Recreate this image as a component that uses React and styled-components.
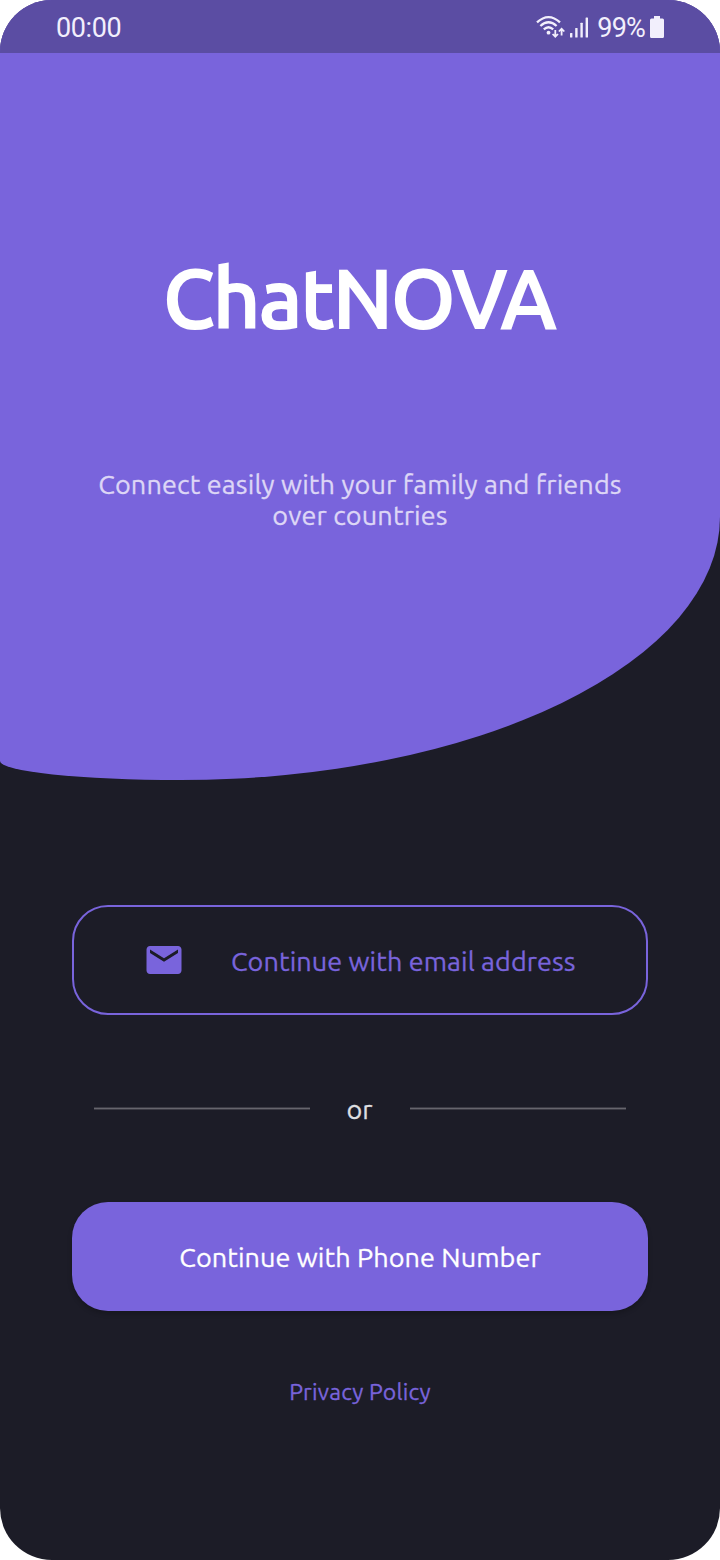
import React from "react";
import styled, { createGlobalStyle } from "styled-components";

const violet = "#7964dc";

const GlobalStyle = createGlobalStyle`
  *, *::before, *::after { box-sizing: border-box; }
  body { margin: 0; background: #fff; }
`;

const Screen = styled.main`
  display: flex;
  flex-direction: column;
  width: 720px;
  height: 1560px;
  overflow: hidden;
  border-radius: 52px;
  background: #1c1c27;
  font-family: Ubuntu, "Noto Sans", sans-serif;
  font-size: 27px;
  -webkit-text-stroke: 0.3px;
`;

const Hero = styled.header`
  display: flex;
  flex-direction: column;
  align-items: center;
  height: 780px;
  flex: none;
  background: ${violet};
  border-radius: 0 0 540px 180px / 0 0 263px 19px;
`;

const StatusBar = styled.div`
  display: flex;
  align-items: center;
  justify-content: space-between;
  width: 100%;
  height: 53px;
  padding: 0 56px;
  background: #5b4da3;
  color: #f2effc;
  font-family: Roboto, sans-serif;
  font-size: 27px;
  line-height: 53px;
  -webkit-text-stroke: 0;
`;

const Clock = styled.span`
  padding-top: 3px;
  letter-spacing: -0.4px;
`;

const Indicators = styled.div`
  display: flex;
  align-items: center;
  height: 53px;
`;

const Percent = styled.span`
  padding-top: 3px;
  margin: 0 5px 0 7px;
  letter-spacing: -0.8px;
`;

const Title = styled.h1`
  margin: 187px 0 0;
  padding-right: 2px;
  font-size: 82px;
  font-weight: 500;
  line-height: 116px;
  letter-spacing: -1.4px;
  color: #fff;
  -webkit-text-stroke: 2px;
`;

const Tagline = styled.p`
  margin: 113px 0 0;
  text-align: center;
  line-height: 31px;
  letter-spacing: 0.14px;
  color: #ddd6f6;
`;

const Line = styled.span`
  display: block;
`;

const Actions = styled.section`
  display: flex;
  flex-direction: column;
  align-items: center;
  padding: 125px 72px 0;
`;

const Button = styled.button`
  display: flex;
  align-items: center;
  justify-content: center;
  width: 576px;
  height: 110px;
  padding: 0;
  border-radius: 36px;
  font: inherit;
  letter-spacing: 0.08px;
  white-space: nowrap;
`;

const EmailButton = styled(Button)`
  justify-content: flex-start;
  padding: 1px 0 0 69px;
  gap: 46px;
  border: 2px solid ${violet};
  background: transparent;
  color: ${violet};
`;

const PhoneButton = styled(Button)`
  height: 109px;
  border: 0;
  background: ${violet};
  color: #fff;
  box-shadow: 0 3px 5px rgba(0, 0, 0, 0.2);
`;

const Divider = styled.div`
  display: flex;
  align-items: center;
  justify-content: space-between;
  width: 532px;
  height: 41px;
  margin: 73px 0;
  color: #dedee0;
`;

const DividerText = styled.span`
  padding: 1px 1px 0 0;
`;

const Rule = styled.span`
  width: 216px;
  height: 3px;
  background: linear-gradient(#3b3a44 1px, #66656d 1px 2px, #3b3a44 2px);
`;

const PolicyLink = styled.a`
  margin-top: 64px;
  color: ${violet};
  font-size: 23px;
  line-height: 34px;
  letter-spacing: 0.2px;
`;

const WifiIcon = () => (
  <svg width="30" height="26" viewBox="0 0 30 26" fill="none" stroke="currentColor">
    <g strokeWidth="2.3">
      <path d="M1 8.4Q12.5-2.1 24 8.4" />
      <path d="M4.4 12Q12.5 4.6 20.6 12" />
      <path d="M7.8 15.4Q12.5 11.1 17.2 15.4" />
    </g>
    <circle cx="12.5" cy="18.7" r="1.9" fill="currentColor" stroke="none" />
    <path strokeWidth="1.8" d="M19.3 16v6.5M16.6 20l2.700 2.800 2.700-2.800M25.600 21.500v-6.500M22.900 17.500l2.700-2.800 2.700 2.800" />
  </svg>
);

const SignalIcon = () => (
  <svg width="24" height="26" viewBox="0 0 24 26" fill="currentColor">
    <rect x="4" y="19" width="2.4" height="4.5" rx=".6" />
    <rect x="9.2" y="14" width="2.4" height="9.5" rx=".6" />
    <rect x="14.4" y="8.7" width="2.4" height="14.8" rx=".6" />
    <rect x="19.6" y="3.5" width="2.4" height="20" rx=".6" />
  </svg>
);

const BatteryIcon = () => (
  <svg width="14" height="22" viewBox="0 0 14 22" fill="currentColor">
    <path d="M4 0h6v2.5h2.5Q14 2.5 14 4v16.5Q14 22 12.5 22h-11Q0 22 0 20.5V4Q0 2.5 1.5 2.5H4z" />
  </svg>
);

const MailGlyph = styled.svg`
  width: 42px;
  height: 42px;
  margin-bottom: 2px;
`;

const MailIcon = () => (
  <MailGlyph viewBox="0 0 24 24" fill="currentColor">
    <path d="M20 4H4c-1.100 0-1.990.9-1.990 2L2 18c0 1.100.9 2 2 2h16c1.100 0 2-.9 2-2V6c0-1.100-.9-2-2-2zm0 4l-8 5-8-5V6l8 5 8-5v2z" />
  </MailGlyph>
);

export default function App() {
  return (
    <>
      <GlobalStyle />
      <Screen>
        <Hero>
          <StatusBar>
            <Clock>00:00</Clock>
            <Indicators>
              <WifiIcon />
              <SignalIcon />
              <Percent>99%</Percent>
              <BatteryIcon />
            </Indicators>
          </StatusBar>
          <Title>ChatNOVA</Title>
          <Tagline>
            <Line>Connect easily with your family and friends</Line>
            <Line>over countries</Line>
          </Tagline>
        </Hero>
        <Actions>
          <EmailButton>
            <MailIcon />
            Continue with email address
          </EmailButton>
          <Divider>
            <Rule />
            <DividerText>or</DividerText>
            <Rule />
          </Divider>
          <PhoneButton>Continue with Phone Number</PhoneButton>
          <PolicyLink>Privacy Policy</PolicyLink>
        </Actions>
      </Screen>
    </>
  );
}
